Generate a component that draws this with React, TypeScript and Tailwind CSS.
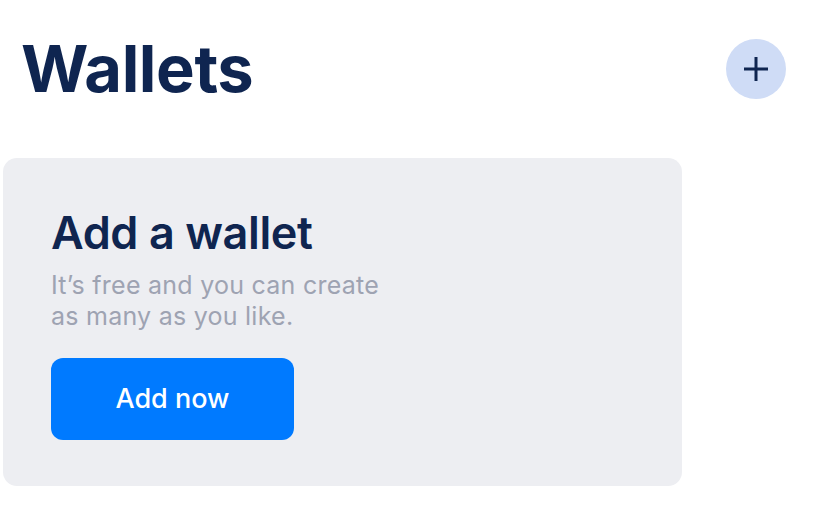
import React from 'react';

const App: React.FC = () => {
  return (
    <div className="w-[818px] h-[508px] bg-white font-['Inter',sans-serif] overflow-hidden">
      {/* Header */}
      <div className="flex items-center justify-between pl-[21px] pr-[32px] pt-[38px] h-[99px]">
        <h1 className="text-[65px] font-bold leading-none tracking-[-0.4px] text-[#0f2550]">Wallets</h1>
        <button className="w-[60px] h-[60px] rounded-full bg-[#cfdcf6] flex items-center justify-center">
          <svg width="28" height="28" viewBox="0 0 28 28" fill="none">
            <path d="M14 2v24M2 14h24" stroke="#0f2550" strokeWidth="3" />
          </svg>
        </button>
      </div>

      {/* Card */}
      <div className="ml-[3px] mt-[59px] w-[679px] h-[328px] rounded-[14px] bg-[#edeef2] pl-[48px] pt-[48px]">
        <h2 className="text-[45px] font-semibold leading-[54px] tracking-[-0.4px] text-[#0f2550]">Add a wallet</h2>
        <p className="mt-[10px] text-[25px] leading-[31px] tracking-[0.25px] text-[#9ea3b2] w-[350px]">
          It’s free and you can create as many as you like.
        </p>
        <button className="mt-[26px] w-[243px] h-[82px] rounded-[12px] bg-[#007aff] text-white text-[27px] font-medium">
          Add now
        </button>
      </div>
    </div>
  );
};

export default App;
